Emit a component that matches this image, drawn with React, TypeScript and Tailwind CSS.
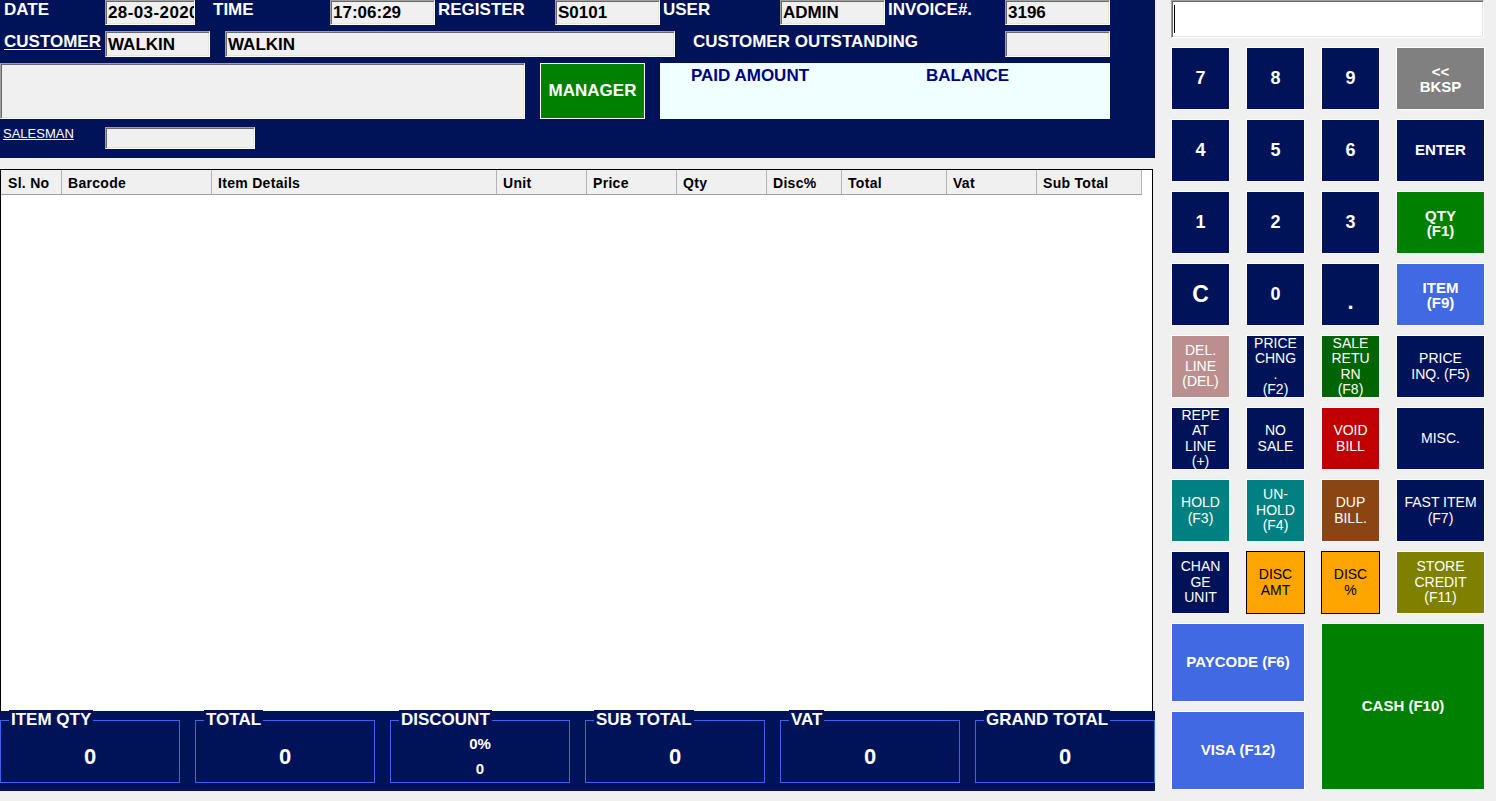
import React from "react";

const inputCls =
  "bg-[#f0f0f0] border border-t-[#a0a0a0] border-l-[#a0a0a0] border-b-white border-r-white shadow-[inset_1px_1px_0_#696969,inset_-1px_-1px_0_#e3e3e3] text-black font-bold text-[17px] leading-none flex items-center pl-[2px] overflow-hidden whitespace-nowrap";

const labelCls = "text-white font-bold text-[17px] leading-[20px] whitespace-nowrap";

type Btn = { lines: string[]; cls: string };

const keys: Btn[] = [
  { lines: ["7"], cls: "bg-[#001359] text-white font-bold text-[18px] border-white" },
  { lines: ["8"], cls: "bg-[#001359] text-white font-bold text-[18px] border-white" },
  { lines: ["9"], cls: "bg-[#001359] text-white font-bold text-[18px] border-white" },
  { lines: ["<<", "BKSP"], cls: "bg-[#808080] text-white font-bold text-[15px] leading-[15px] border-white" },
  { lines: ["4"], cls: "bg-[#001359] text-white font-bold text-[18px] border-white" },
  { lines: ["5"], cls: "bg-[#001359] text-white font-bold text-[18px] border-white" },
  { lines: ["6"], cls: "bg-[#001359] text-white font-bold text-[18px] border-white" },
  { lines: ["ENTER"], cls: "bg-[#001359] text-white font-bold text-[15px] border-white" },
  { lines: ["1"], cls: "bg-[#001359] text-white font-bold text-[18px] border-white" },
  { lines: ["2"], cls: "bg-[#001359] text-white font-bold text-[18px] border-white" },
  { lines: ["3"], cls: "bg-[#001359] text-white font-bold text-[18px] border-white" },
  { lines: ["QTY", "(F1)"], cls: "bg-[#008000] text-white font-bold text-[15px] leading-[15px] border-white" },
  { lines: ["C"], cls: "bg-[#001359] text-white font-bold text-[23px] border-white" },
  { lines: ["0"], cls: "bg-[#001359] text-white font-bold text-[18px] border-white" },
  { lines: ["."], cls: "bg-[#001359] text-white font-bold text-[22px] pt-[14px] border-white" },
  { lines: ["ITEM", "(F9)"], cls: "bg-[#4169e1] text-white font-bold text-[15px] leading-[15px] border-white" },
  { lines: ["DEL.", "LINE", "(DEL)"], cls: "bg-[#bc8f8f] text-white text-[14px] leading-[15.5px] border-white" },
  { lines: ["PRICE", "CHNG", ".", "(F2)"], cls: "bg-[#001359] text-white text-[14px] leading-[15.5px] border-white" },
  { lines: ["SALE", "RETU", "RN", "(F8)"], cls: "bg-[#006400] text-white text-[14px] leading-[15.5px] border-white" },
  { lines: ["PRICE", "INQ. (F5)"], cls: "bg-[#001359] text-white text-[14px] leading-[15.5px] border-white" },
  { lines: ["REPE", "AT", "LINE", "(+)"], cls: "bg-[#001359] text-white text-[14px] leading-[15.5px] border-white" },
  { lines: ["NO", "SALE"], cls: "bg-[#001359] text-white text-[14px] leading-[15.5px] border-white" },
  { lines: ["VOID", "BILL"], cls: "bg-[#c00000] text-white text-[14px] leading-[15.5px] border-white" },
  { lines: ["MISC."], cls: "bg-[#001359] text-white text-[14px] leading-[15.5px] border-white" },
  { lines: ["HOLD", "(F3)"], cls: "bg-[#008080] text-white text-[14px] leading-[15.5px] border-white" },
  { lines: ["UN-", "HOLD", "(F4)"], cls: "bg-[#008080] text-white text-[14px] leading-[15.5px] border-white" },
  { lines: ["DUP", "BILL."], cls: "bg-[#8b4513] text-white text-[14px] leading-[15.5px] border-white" },
  { lines: ["FAST ITEM", "(F7)"], cls: "bg-[#001359] text-white text-[14px] leading-[15.5px] border-white" },
  { lines: ["CHAN", "GE", "UNIT"], cls: "bg-[#001359] text-white text-[14px] leading-[15.5px] border-white" },
  { lines: ["DISC", "AMT"], cls: "bg-[#ffa500] text-black text-[14px] leading-[15.5px] border-black" },
  { lines: ["DISC", "%"], cls: "bg-[#ffa500] text-black text-[14px] leading-[15.5px] border-black" },
  { lines: ["STORE", "CREDIT", "(F11)"], cls: "bg-[#808000] text-white text-[14px] leading-[15.5px] border-white" },
];

const cols = [
  { name: "Sl. No", w: "w-[61px] pl-[7px]" },
  { name: "Barcode", w: "w-[150px] pl-[6px]" },
  { name: "Item Details", w: "w-[285px] pl-[6px]" },
  { name: "Unit", w: "w-[90px] pl-[6px]" },
  { name: "Price", w: "w-[90px] pl-[6px]" },
  { name: "Qty", w: "w-[90px] pl-[6px]" },
  { name: "Disc%", w: "w-[75px] pl-[6px]" },
  { name: "Total", w: "w-[105px] pl-[6px]" },
  { name: "Vat", w: "w-[90px] pl-[6px]" },
  { name: "Sub Total", w: "w-[105px] pl-[6px]" },
];

function Group({ title, children }: { title: string; children: React.ReactNode }) {
  return (
    <div className="relative w-[180px] h-[63px] border border-[#3a63ee] flex flex-col items-center justify-center pt-[11px]">
      <div className="absolute -top-[11px] left-[8px] px-[2px] bg-[#001359] text-white font-bold text-[17px] leading-[20px] whitespace-nowrap">
        {title}
      </div>
      {children}
    </div>
  );
}

export default function App() {
  return (
    <div
      className="w-[1496px] h-[801px] bg-[#f0f0f0] flex overflow-hidden"
      style={{ fontFamily: '"Liberation Sans", Arial, sans-serif' }}
    >
      {/* LEFT */}
      <div className="w-[1155px] flex flex-col">
        {/* header */}
        <div className="h-[158px] bg-[#001359] flex flex-col">
          <div className="flex h-[25px] items-start">
            <div className={`${labelCls} w-[105px] pl-[4px]`}>DATE</div>
            <div className={`${inputCls} w-[90px] h-[25px] tracking-[0.4px]`}>28-03-2020</div>
            <div className={`${labelCls} w-[135px] pl-[18px]`}>TIME</div>
            <div className={`${inputCls} w-[105px] h-[25px]`}>17:06:29</div>
            <div className={`${labelCls} w-[120px] pl-[3px]`}>REGISTER</div>
            <div className={`${inputCls} w-[105px] h-[25px]`}>S0101</div>
            <div className={`${labelCls} w-[120px] pl-[3px]`}>USER</div>
            <div className={`${inputCls} w-[105px] h-[25px]`}>ADMIN</div>
            <div className={`${labelCls} w-[120px] pl-[3px]`}>INVOICE#.</div>
            <div className={`${inputCls} w-[105px] h-[25px]`}>3196</div>
          </div>
          <div className="flex h-[26px] mt-[6px] items-start">
            <div className={`${labelCls} w-[105px] pl-[4px] pt-[1px]`}>
              <span className="underline underline-offset-[2px]">CUSTOMER</span>
            </div>
            <div className={`${inputCls} w-[105px] h-[26px]`}>WALKIN</div>
            <div className="w-[15px]" />
            <div className={`${inputCls} w-[450px] h-[26px]`}>WALKIN</div>
            <div className={`${labelCls} w-[330px] pl-[18px] pt-[1px]`}>CUSTOMER OUTSTANDING</div>
            <div className={`${inputCls} w-[105px] h-[26px]`}></div>
          </div>
          <div className="flex h-[56px] mt-[6px]">
            <div className={`${inputCls} w-[525px] h-[56px]`}></div>
            <div className="w-[15px]" />
            <div className="w-[105px] h-[56px] bg-[#008000] border border-white text-white font-bold text-[17px] flex items-center justify-center">
              MANAGER
            </div>
            <div className="w-[15px]" />
            <div className="w-[450px] h-[56px] bg-[#f0ffff] flex items-start pt-[3px] text-[#000080] font-bold text-[17px] leading-[20px]">
              <div className="w-[266px] pl-[31px]">PAID AMOUNT</div>
              <div>BALANCE</div>
            </div>
          </div>
          <div className="flex h-[22px] mt-[8px] items-start">
            <div className="w-[105px] pl-[3px] text-white text-[13px] leading-[14px] underline">SALESMAN</div>
            <div className={`${inputCls} w-[150px] h-[22px]`}></div>
          </div>
        </div>

        <div className="h-[11px]" />

        {/* grid */}
        <div className="w-[1153px] h-[542px] border border-black border-b-0 bg-white flex flex-col">
          <div className="flex h-[25px] w-[1141px] bg-[#f0f0f0] border-b border-[#a0a0a0]">
            {cols.map((c) => (
              <div
                key={c.name}
                className={`${c.w} h-full border-r border-[#b4b4b4] flex items-center pt-[3px] text-black font-bold text-[14px] tracking-[0.3px] whitespace-nowrap`}
              >
                {c.name}
              </div>
            ))}
          </div>
        </div>

        {/* totals */}
        <div className="h-[80px] bg-[#001359] flex gap-[15px] pt-[9px]">
          <Group title="ITEM QTY">
            <div className="text-white font-bold text-[22px] leading-[24px]">0</div>
          </Group>
          <Group title="TOTAL">
            <div className="text-white font-bold text-[22px] leading-[24px]">0</div>
          </Group>
          <Group title="DISCOUNT">
            <div className="text-white font-bold text-[15px] leading-[25px] -mt-[2px]">0%</div>
            <div className="text-white font-bold text-[15px] leading-[25px]">0</div>
          </Group>
          <Group title="SUB TOTAL">
            <div className="text-white font-bold text-[22px] leading-[24px]">0</div>
          </Group>
          <Group title="VAT">
            <div className="text-white font-bold text-[22px] leading-[24px]">0</div>
          </Group>
          <Group title="GRAND TOTAL">
            <div className="text-white font-bold text-[22px] leading-[24px]">0</div>
          </Group>
        </div>
      </div>

      {/* RIGHT */}
      <div className="w-[341px] pl-[16px] flex flex-col">
        <div className="w-[313px] h-[38px] bg-white border border-t-[#a0a0a0] border-l-[#a0a0a0] border-b-white border-r-white shadow-[inset_1px_1px_0_#696969,inset_-1px_-1px_0_#e3e3e3] flex items-center pl-[2px]">
          <div className="w-[1px] h-[28px] bg-black" />
        </div>
        <div className="mt-[9px] grid grid-cols-[59px_59px_59px_89px] gap-x-[16px] gap-y-[9px] auto-rows-[63px]">
          {keys.map((k, i) => (
            <div
              key={i}
              className={`${k.cls} border overflow-hidden flex flex-col items-center justify-center text-center whitespace-nowrap`}
            >
              {k.lines.map((l, j) => (
                <div key={j}>{l}</div>
              ))}
            </div>
          ))}
        </div>
        <div className="mt-[9px] grid grid-cols-[134px_164px] gap-x-[16px] gap-y-[9px] grid-rows-[79px_79px]">
          <div className="bg-[#4169e1] border border-white text-white font-bold text-[15px] flex items-center justify-center">
            PAYCODE (F6)
          </div>
          <div className="row-span-2 bg-[#008000] border border-white text-white font-bold text-[15px] flex items-center justify-center">
            CASH (F10)
          </div>
          <div className="bg-[#4169e1] border border-white text-white font-bold text-[15px] flex items-center justify-center">
            VISA (F12)
          </div>
        </div>
      </div>
    </div>
  );
}
